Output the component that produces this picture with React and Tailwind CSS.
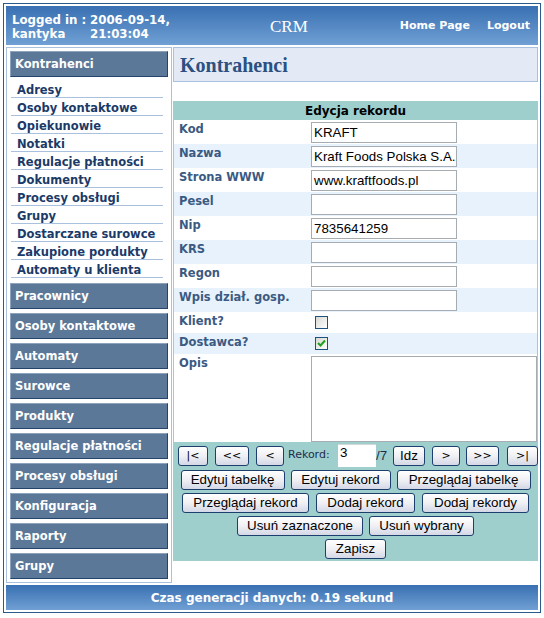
import React from "react";

const sub = [
  "Adresy",
  "Osoby kontaktowe",
  "Opiekunowie",
  "Notatki",
  "Regulacje płatności",
  "Dokumenty",
  "Procesy obsługi",
  "Grupy",
  "Dostarczane surowce",
  "Zakupione pordukty",
  "Automaty u klienta",
];

const menu = [
  "Pracownicy",
  "Osoby kontaktowe",
  "Automaty",
  "Surowce",
  "Produkty",
  "Regulacje płatności",
  "Procesy obsługi",
  "Konfiguracja",
  "Raporty",
  "Grupy",
];

const fields = [
  ["Kod", "KRAFT"],
  ["Nazwa", "Kraft Foods Polska S.A."],
  ["Strona WWW", "www.kraftfoods.pl"],
  ["Pesel", ""],
  ["Nip", "7835641259"],
  ["KRS", ""],
  ["Regon", ""],
  ["Wpis dział. gosp.", ""],
];

function MenuBtn({ children }) {
  return (
    <div className="h-[26px] flex items-center pl-[4px] bg-[#5b7898] border border-[#24446c] border-t-[#8ea3bb] border-l-[#8ea3bb] text-white font-bold text-[11.5px] leading-[14px]">
      {children}
    </div>
  );
}

function Btn({ w, children, glyph }) {
  return (
    <div
      className={
        "h-[20px] flex items-center justify-center rounded-[3px] border border-[#1d3f6e] bg-linear-to-b from-white via-[#f0f0f4] to-[#d4d8e6] text-black leading-none whitespace-nowrap " +
        w +
        (glyph
          ? " font-['DejaVu_Sans',sans-serif] text-[11px]"
          : " font-['Liberation_Sans',Arial,sans-serif] text-[13.33px]")
      }
    >
      {children}
    </div>
  );
}

function Checkbox({ checked }) {
  return (
    <div className="w-[13px] h-[13px] border border-[#1c5180] bg-linear-to-br from-[#d8d8d2] to-white flex items-center justify-center">
      {checked && (
        <svg width="9" height="9" viewBox="0 0 9 9">
          <path d="M1 4 L3.5 6.5 L8 1.5" stroke="#21a121" strokeWidth="2" fill="none" />
        </svg>
      )}
    </div>
  );
}

export default function App() {
  return (
    <div className="w-[544px] h-[618px] bg-white pt-[3px] pl-[3px] font-['DejaVu_Sans',Verdana,sans-serif]">
      <div className="w-[538px] h-[610px] border border-[#2b5b8e] p-[2px] flex flex-col">
        {/* header */}
        <div className="h-[39px] pt-[2px] flex items-center bg-linear-to-b from-[#3970b2] to-[#70a0d4] text-white">
          <div className="w-[264px] pl-[6px] grid grid-cols-[78px_auto] text-[11.8px] leading-[14px] font-bold">
            <div className="whitespace-nowrap">Logged in :</div>
            <div>2006-09-14,</div>
            <div>kantyka</div>
            <div>21:03:04</div>
          </div>
          <div className="font-['Liberation_Serif',serif] text-[17px] leading-none">CRM</div>
          <div className="flex-1 flex justify-end gap-[17px] pr-[8px] text-[11px] font-bold">
            <span>Home Page</span>
            <span>Logout</span>
          </div>
        </div>

        {/* body */}
        <div className="mt-[2px] h-[536px] flex gap-[1px]">
          {/* sidebar */}
          <div className="w-[166px] border border-[#a9c1de] pt-[3px] px-[3px]">
            <MenuBtn>Kontrahenci</MenuBtn>
            <div className="mt-[3px]">
              {sub.map((s) => (
                <div
                  key={s}
                  className="h-[18px] ml-[1px] mr-[5px] border-b border-[#a9c1de] flex items-end pl-[6px] text-[11.5px] leading-[14px] font-bold text-[#1b3a68]"
                >
                  {s}
                </div>
              ))}
            </div>
            <div className="mt-[5px] flex flex-col gap-[4px]">
              {menu.map((m) => (
                <MenuBtn key={m}>{m}</MenuBtn>
              ))}
            </div>
          </div>

          {/* content */}
          <div className="w-[365px] flex flex-col">
            <div className="h-[35px] bg-[#e3eaf5] border border-[#a9c1de] flex items-center pl-[6px] font-['Liberation_Serif',serif] font-bold text-[20px] text-[#2b5082]">
              Kontrahenci
            </div>
            <div className="mt-[19px] bg-[#9fcfcc]">
              <div className="h-[19px] flex items-center justify-center text-[12px] font-bold text-black">
                Edycja rekordu
              </div>
              <div className="px-[1px]">
                {fields.map(([l, v], i) => (
                  <div
                    key={l}
                    className={"h-[24px] flex " + (i % 2 ? "bg-[#e8f2fd]" : "bg-white")}
                  >
                    <div className="w-[137px] pl-[5px] pt-[2px] text-[11.5px] leading-[14px] font-bold text-[#3b5a82]">
                      {l}
                    </div>
                    <div className="mt-[2px] w-[146px] h-[21px] border border-[#a5acb2] bg-white pl-[2px] flex items-center font-['Liberation_Sans',Arial,sans-serif] text-[13.33px] text-black whitespace-nowrap overflow-hidden">
                      {v}
                    </div>
                  </div>
                ))}
                <div className="h-[21px] flex bg-white">
                  <div className="w-[137px] pl-[5px] pt-[2px] text-[11.5px] leading-[14px] font-bold text-[#3b5a82]">
                    Klient?
                  </div>
                  <div className="ml-[4px] mt-[4px]">
                    <Checkbox />
                  </div>
                </div>
                <div className="h-[21px] flex bg-[#e8f2fd]">
                  <div className="w-[137px] pl-[5px] pt-[2px] text-[11.5px] leading-[14px] font-bold text-[#3b5a82]">
                    Dostawca?
                  </div>
                  <div className="ml-[4px] mt-[4px]">
                    <Checkbox checked />
                  </div>
                </div>
                <div className="h-[88px] flex bg-white">
                  <div className="w-[137px] pl-[5px] pt-[2px] text-[11.5px] leading-[14px] font-bold text-[#3b5a82]">
                    Opis
                  </div>
                  <div className="mt-[2px] w-[226px] h-[86px] border border-[#a5acb2] bg-white"></div>
                </div>
              </div>

              {/* navigation */}
              <div className="pt-[2px] pb-[2px] flex flex-col gap-[3px]">
                <div className="h-[23px] flex items-center pl-[5px]">
                  <Btn w="w-[30px]" glyph>|&lt;</Btn>
                  <div className="ml-[7px]">
                    <Btn w="w-[34px]" glyph>&lt;&lt;</Btn>
                  </div>
                  <div className="ml-[7px]">
                    <Btn w="w-[28px]" glyph>&lt;</Btn>
                  </div>
                  <div className="ml-[4px] w-[50px] text-[11px] text-[#1c2c4c]">Rekord:</div>
                  <div className="w-[38px] h-[23px] bg-white border-t border-[#d0d8d8] pl-[2px] font-['Liberation_Sans',Arial,sans-serif] text-[13.33px] leading-[16px] text-black">
                    3
                  </div>
                  <div className="w-[17px] font-['Liberation_Sans',Arial,sans-serif] text-[13.33px] text-[#1c2c4c]">/7</div>
                  <Btn w="w-[32px]">Idz</Btn>
                  <div className="ml-[7px]">
                    <Btn w="w-[28px]" glyph>&gt;</Btn>
                  </div>
                  <div className="ml-[6px]">
                    <Btn w="w-[33px]" glyph>&gt;&gt;</Btn>
                  </div>
                  <div className="ml-[8px]">
                    <Btn w="w-[31px]" glyph>&gt;|</Btn>
                  </div>
                </div>
                <div className="flex justify-center gap-[6px]">
                  <Btn w="w-[104px]">Edytuj tabelkę</Btn>
                  <Btn w="w-[100px]">Edytuj rekord</Btn>
                  <Btn w="w-[134px]">Przeglądaj tabelkę</Btn>
                </div>
                <div className="flex justify-center gap-[7px]">
                  <Btn w="w-[127px]">Przeglądaj rekord</Btn>
                  <Btn w="w-[99px]">Dodaj rekord</Btn>
                  <Btn w="w-[107px]">Dodaj rekordy</Btn>
                </div>
                <div className="flex justify-center gap-[6px]">
                  <Btn w="w-[126px]">Usuń zaznaczone</Btn>
                  <Btn w="w-[105px]">Usuń wybrany</Btn>
                </div>
                <div className="flex justify-center">
                  <Btn w="w-[61px]">Zapisz</Btn>
                </div>
              </div>
            </div>
          </div>
        </div>

        {/* footer */}
        <div className="mt-[2px] h-[25px] flex items-center justify-center bg-linear-to-b from-[#3970b2] to-[#70a0d4] text-white text-[12px] font-bold">
          Czas generacji danych: 0.19 sekund
        </div>
      </div>
    </div>
  );
}
